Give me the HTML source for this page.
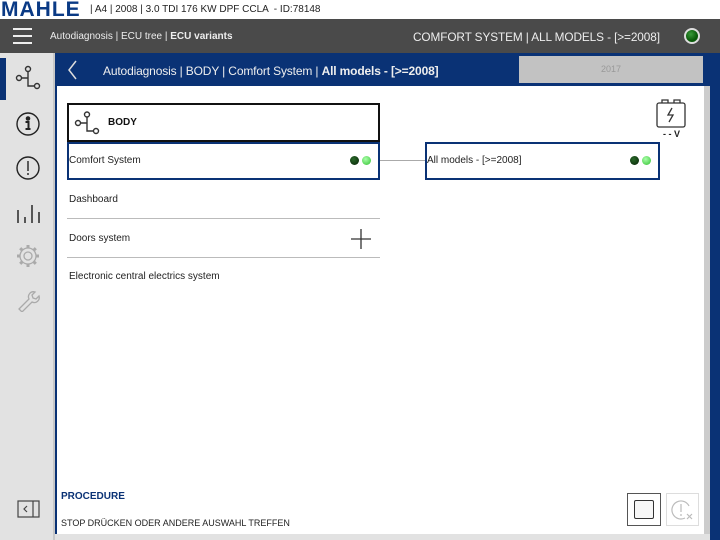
<!DOCTYPE html>
<html><head><meta charset="utf-8"><style>
*{margin:0;padding:0;box-sizing:border-box}
body{width:720px;height:540px;overflow:hidden;background:#e2e2e2;font-family:"Liberation Sans",sans-serif;position:relative}
.a{position:absolute}
</style></head><body>
<div class="a" style="left:0;top:0;width:720px;height:19px;background:#fff"></div>
<div class="a" style="left:1px;top:0;font-size:21px;font-weight:bold;color:#0a3a85;letter-spacing:1px;line-height:20px;">MAHLE</div>
<div class="a" style="left:90px;top:4px;font-size:10px;color:#222">| A4 | 2008 | 3.0 TDI 176 KW DPF CCLA &nbsp;- ID:78148</div>
<div class="a" style="left:0;top:19px;width:720px;height:34px;background:#4a4a4a"></div>
<div class="a" style="left:13px;top:28px;width:19px;height:2px;background:#eee"></div>
<div class="a" style="left:13px;top:35px;width:19px;height:2px;background:#eee"></div>
<div class="a" style="left:13px;top:42px;width:19px;height:2px;background:#eee"></div>
<div class="a" style="left:50px;top:31px;font-size:10px;color:#eee">Autodiagnosis | ECU tree | <b>ECU variants</b></div>
<div class="a" style="left:413px;top:30px;font-size:11.8px;color:#eee;letter-spacing:-0.1px">COMFORT SYSTEM | ALL MODELS - [&gt;=2008]</div>
<div class="a" style="left:684px;top:28px;width:16px;height:16px;border-radius:50%;background:radial-gradient(circle at 40% 35%,#3a9a3a,#0a5a0a 60%);border:2px solid #ddd"></div>
<!-- sidebar -->
<div class="a" style="left:53px;top:53px;width:2px;height:487px;background:#c8c8c8"></div>
<div class="a" style="left:0;top:58px;width:6px;height:42px;background:#0a3275"></div>
<svg class="a" style="left:14px;top:64px" width="28" height="28" viewBox="0 0 28 28" fill="none" stroke="#333" stroke-width="1.4"><circle cx="14" cy="5" r="2.5"/><circle cx="5" cy="14" r="2.5"/><circle cx="23" cy="22" r="2.5"/><path d="M14 7.5V22H20.5M7.5 14H14"/></svg>
<svg class="a" style="left:15px;top:111px" width="26" height="26" fill="none" stroke="#222" stroke-width="1.4"><circle cx="13" cy="13" r="11"/><circle cx="13" cy="7.5" r="1.6" fill="#222"/><path d="M10.5 11h3v7M10.5 18h5" stroke-width="2"/></svg>
<svg class="a" style="left:15px;top:155px" width="26" height="26" fill="none" stroke="#222" stroke-width="1.4"><circle cx="13" cy="13" r="11"/><path d="M13 6v10M13 18v2"/></svg>
<svg class="a" style="left:15px;top:200px" width="26" height="24" stroke="#333" stroke-width="1.6"><path d="M3 10v13M10 17v6M17 5v18M24 12v11"/></svg>
<svg class="a" style="left:16px;top:244px" width="24" height="24" fill="none" stroke="#aaa" stroke-width="1.3"><circle cx="12" cy="12" r="4"/><circle cx="12" cy="12" r="8"/><g stroke-width="3"><path d="M12 1v3M12 20v3M1 12h3M20 12h3M4.2 4.2l2.1 2.1M17.7 17.7l2.1 2.1M4.2 19.8l2.1-2.1M17.7 6.3l2.1-2.1"/></g></svg>
<svg class="a" style="left:16px;top:288px" width="24" height="24" fill="none" stroke="#aaa" stroke-width="1.3"><path d="M3 21l10-10a5 5 0 0 1 6-7l-3 3 1 3 3 1 3-3a5 5 0 0 1-7 6l-10 10z"/></svg>
<svg class="a" style="left:17px;top:500px" width="24" height="18" fill="none" stroke="#444" stroke-width="1.2"><rect x="1" y="1" width="21" height="16"/><path d="M16 1v16M10 6l-3 3 3 3"/></svg>
<!-- main panel -->
<div class="a" style="left:55px;top:53px;width:665px;height:487px;background:#0a3275"></div>
<div class="a" style="left:57px;top:86px;width:647px;height:448px;background:#fff"></div>
<div class="a" style="left:704px;top:86px;width:6px;height:454px;background:#ccc"></div>
<div class="a" style="left:55px;top:534px;width:655px;height:6px;background:#e2e2e2"></div>
<svg class="a" style="left:66px;top:59px" width="14" height="22" fill="none" stroke="#ddd" stroke-width="1.5"><path d="M10 2L3 11l7 9"/></svg>
<div class="a" style="left:103px;top:64px;font-size:12px;color:#eee;letter-spacing:-0.15px">Autodiagnosis | BODY | Comfort System | <b>All models - [&gt;=2008]</b></div>
<div class="a" style="left:519px;top:56px;width:184px;height:27px;background:#c2c2c2;color:#999;font-size:9px;text-align:center;line-height:27px">2017</div>
<!-- tree -->
<div class="a" style="left:67px;top:103px;width:313px;height:39px;border:2px solid #111"></div>
<svg class="a" style="left:73px;top:110px" width="28" height="26" fill="none" stroke="#333" stroke-width="1.4"><circle cx="14" cy="4.5" r="2.5"/><circle cx="5" cy="13" r="2.5"/><circle cx="23" cy="21" r="2.5"/><path d="M14 7v14H20.5M7.5 13H14"/></svg>
<div class="a" style="left:108px;top:117px;font-size:10px;font-weight:bold;color:#111">BODY</div>
<div class="a" style="left:67px;top:142px;width:313px;height:38px;border:2px solid #0a3275"></div>
<div class="a" style="left:69px;top:155px;font-size:10px;color:#222">Comfort System</div>
<div class="a" style="left:350px;top:156px;width:9px;height:9px;border-radius:50%;background:radial-gradient(circle at 40% 35%,#2a6a2a,#052005)"></div>
<div class="a" style="left:362px;top:156px;width:9px;height:9px;border-radius:50%;background:radial-gradient(circle at 40% 35%,#aaffaa,#30c030)"></div>
<div class="a" style="left:380px;top:160px;width:45px;height:1px;background:#aaa"></div>
<div class="a" style="left:425px;top:142px;width:235px;height:38px;border:2px solid #0a3275"></div>
<div class="a" style="left:427px;top:155px;font-size:10px;color:#222">All models - [&gt;=2008]</div>
<div class="a" style="left:630px;top:156px;width:9px;height:9px;border-radius:50%;background:radial-gradient(circle at 40% 35%,#2a6a2a,#052005)"></div>
<div class="a" style="left:642px;top:156px;width:9px;height:9px;border-radius:50%;background:radial-gradient(circle at 40% 35%,#aaffaa,#30c030)"></div>
<div class="a" style="left:69px;top:194px;font-size:10px;color:#222">Dashboard</div>
<div class="a" style="left:67px;top:218px;width:313px;height:1px;background:#bbb"></div>
<div class="a" style="left:69px;top:233px;font-size:10px;color:#222">Doors system</div>
<svg class="a" style="left:350px;top:228px" width="22" height="22" stroke="#333" stroke-width="1.3"><path d="M11 1v20M1 11h20"/></svg>
<div class="a" style="left:67px;top:257px;width:313px;height:1px;background:#bbb"></div>
<div class="a" style="left:69px;top:271px;font-size:10px;color:#222">Electronic central electrics system</div>
<svg class="a" style="left:655px;top:99px" width="32" height="30" fill="none" stroke="#333" stroke-width="1.3"><rect x="2" y="4" width="28" height="24" rx="2"/><path d="M7 4V1h6v3M19 4V1h6v3M17 9l-4 7h5l-4 7"/></svg>
<div class="a" style="left:663px;top:129px;font-size:9px;font-weight:bold;color:#222">- - V</div>
<!-- bottom -->
<div class="a" style="left:61px;top:491px;font-size:10px;font-weight:bold;color:#0a3275">PROCEDURE</div>
<div class="a" style="left:61px;top:518px;font-size:9px;color:#222">STOP DRÜCKEN ODER ANDERE AUSWAHL TREFFEN</div>
<div class="a" style="left:627px;top:493px;width:34px;height:33px;border:1px solid #555;background:#fff"></div>
<div class="a" style="left:634px;top:500px;width:20px;height:19px;border:1.5px solid #333;border-radius:2px;background:#f7f7f7"></div>
<div class="a" style="left:666px;top:493px;width:33px;height:33px;border:1px solid #ddd"></div>
<svg class="a" style="left:670px;top:498px" width="26" height="24" fill="none" stroke="#bbb" stroke-width="1.2"><path d="M15 20A9 9 0 1 1 19 8"/><path d="M11 6v8M11 16v2M17 16l5 5M22 16l-5 5"/></svg>
</body></html>
